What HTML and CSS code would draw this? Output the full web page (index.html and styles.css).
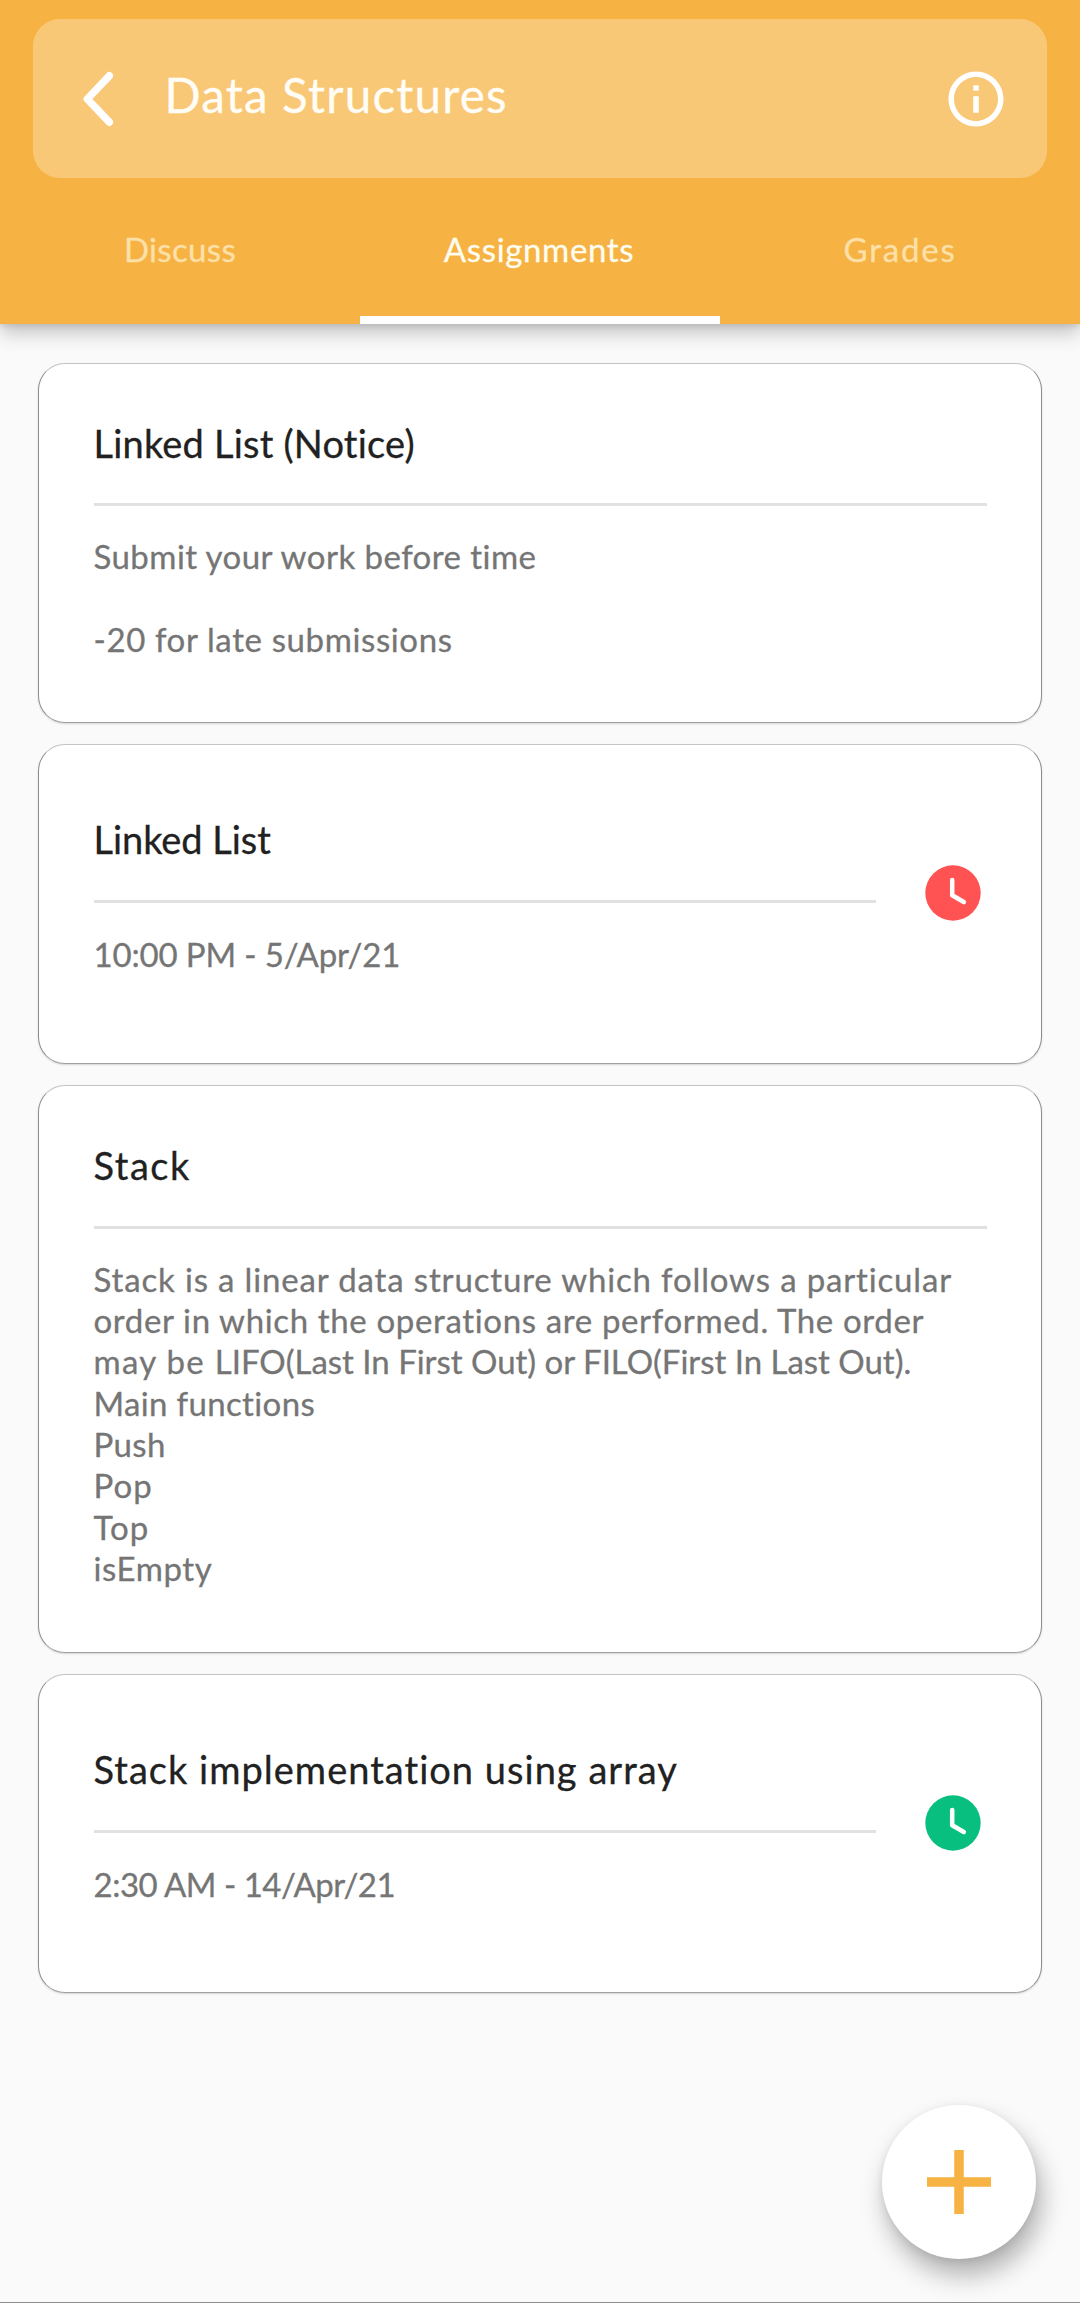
FILE: index.html
```html
<!DOCTYPE html>
<html lang="en">
<head>
<meta charset="utf-8">
<title>Data Structures - Assignments</title>
<link rel="stylesheet" href="styles.css">
</head>
<body>
<div class="screen">
  <header class="header">
    <div class="course-bar">
      <svg class="back-icon" viewBox="0 0 36 60" width="36" height="60"><path d="M30.300 6.800 8.300 30l22 23.200"/></svg>
      <h1 class="course-title">Data Structures</h1>
      <svg class="info-icon" viewBox="0 0 24 24" width="66" height="66"><path d="M11 7h2v2h-2zm0 4h2v6h-2zm1-9C6.480 2 2 6.480 2 12s4.480 10 10 10 10-4.480 10-10S17.520 2 12 2zm0 18c-4.410 0-8-3.590-8-8s3.590-8 8-8 8 3.590 8 8-3.590 8-8 8z"/></svg>
    </div>
    <nav class="tabs">
      <a class="tab tab-discuss">Discuss</a>
      <a class="tab tab-assignments active">Assignments</a>
      <a class="tab tab-grades">Grades</a>
    </nav>
  </header>

  <main class="list">
    <article class="card notice">
      <h2 class="title title-notice">Linked List (Notice)</h2>
      <hr>
      <p class="text"><span class="track-40">Submit your work before time</span><br><br><span class="track-60">-20 for late submissions</span></p>
    </article>

    <article class="card due">
      <div class="details">
        <h2 class="title title-list">Linked List</h2>
        <hr>
        <p class="text track-0">10:00 PM - 5/Apr/21</p>
      </div>
      <svg class="clock late" viewBox="0 0 56 56" width="56" height="56"><circle cx="28" cy="28" r="27.700"/><path d="M27.200 15V30.300L38.800 37"/></svg>
    </article>

    <article class="card topic">
      <h2 class="title title-stack">Stack</h2>
      <hr>
      <p class="text"><span class="track-80">Stack is a linear data structure which follows a particular</span><br><span class="track-65">order in which the operations are performed. The order</span><br><span class="track-130">may be </span><span class="track-flat">LIFO(Last In First Out) or FILO(First In Last Out).</span><br><span class="track-35">Main functions</span><br><span class="track-35">Push</span><br><span class="track-90">Pop</span><br><span class="track-90">Top</span><br><span class="track-60">isEmpty</span></p>
    </article>

    <article class="card due">
      <div class="details">
        <h2 class="title title-array">Stack implementation using array</h2>
        <hr>
        <p class="text track-tight">2:30 AM - 14/Apr/21</p>
      </div>
      <svg class="clock open" viewBox="0 0 56 56" width="56" height="56"><circle cx="28" cy="28" r="27.700"/><path d="M27.200 15V30.300L38.800 37"/></svg>
    </article>
  </main>

  <button class="add" aria-label="Add assignment">
    <svg viewBox="0 0 66 66" width="66" height="66"><path d="M33 1v64M1 33h64"/></svg>
  </button>
</div>
</body>
</html>
```
FILE: styles.css
```css
* { box-sizing: border-box; }

body {
  margin: 0;
  background: #fafafa;
  font-family: Lato, "Open Sans", sans-serif;
  -webkit-text-stroke-width: .3px;
}

.screen {
  position: relative;
  height: 2303px;
  overflow: hidden;
  border-bottom: 1px solid #8f8f8f;
}

/* Header */
.header {
  height: 323.500px;
  padding: 19px 33px 0;
  background: #f6b243;
  box-shadow: 0 9px 18px rgba(0, 0, 0, .22), 0 2px 6px rgba(0, 0, 0, .1);
}

.course-bar {
  display: flex;
  align-items: center;
  height: 159px;
  padding: 0 38.500px 0 46px;
  border-radius: 27px;
  background: #f9c877;
}

.back-icon {
  fill: none;
  stroke: #fff;
  stroke-width: 7.500;
  stroke-linecap: round;
  stroke-linejoin: round;
}

.course-title {
  flex: 1;
  margin: 0 0 7px 49.500px;
  color: #fffdf5;
  font-size: 47.500px;
  font-weight: 400;
  line-height: 56px;
  letter-spacing: 1.200px;
}

.info-icon { fill: #fff; }

.tabs {
  display: grid;
  grid-template-columns: repeat(3, 360px);
  height: 145.500px;
  margin: 0 -33px;
}

.tab {
  padding-top: 51px;
  border-bottom: 8.500px solid transparent;
  color: #fde0a8;
  font-size: 33px;
  line-height: 40px;
  text-align: center;
}

.tab.active { color: #fffdf0; border-color: #fff; }
.tab-discuss { letter-spacing: .350px; }
.tab-assignments { padding-right: 2px; letter-spacing: .650px; }
.tab-grades { letter-spacing: 1.800px; }

/* Cards */
.list {
  display: flex;
  flex-direction: column;
  gap: 21px;
  padding: 39.500px 38px 0;
}

.card {
  padding: 56.500px 54.500px 0;
  border: 1px solid #8c8c8c;
  border-top-color: #c4c4c4;
  border-bottom-color: #a0a0a0;
  border-radius: 27px;
  background: #fff;
  box-shadow: 0 1px 2px rgba(0, 0, 0, .15);
}

.notice { height: 360px; }
.topic { height: 568px; padding-top: 57.500px; }

.due {
  display: flex;
  justify-content: space-between;
  height: 319.500px;
  padding-top: 72px;
}

.details { width: 782px; }

.title {
  margin: 0 0 38.500px;
  color: #212121;
  font-size: 38px;
  font-weight: 400;
  line-height: 44px;
}

.due .title { margin-bottom: 39px; }

.title-notice { letter-spacing: .200px; }
.title-list { letter-spacing: -.050px; }
.title-stack { letter-spacing: 1.500px; }
.title-array { letter-spacing: 1.020px; }

hr {
  height: 3px;
  margin: 0 0 30px;
  border: 0;
  background: #e1e1e1;
}

.text {
  margin: 0;
  color: #757575;
  font-size: 33px;
  line-height: 41.350px;
  white-space: nowrap;
}

.due .text { margin-top: 31px; }

/* Per-phrase tracking */
.track-tight { letter-spacing: -.500px; }
.track-0 { letter-spacing: -.150px; }
.track-flat { letter-spacing: -.020px; }
.track-35 { letter-spacing: .350px; }
.track-40 { letter-spacing: .450px; }
.track-60 { letter-spacing: .620px; }
.track-65 { letter-spacing: .640px; }
.track-80 { letter-spacing: .840px; }
.track-90 { letter-spacing: 1.100px; }
.track-130 { letter-spacing: 1.300px; }

.clock { margin: 48.300px 5.500px 0 0; }
.clock path {
  fill: none;
  stroke: #fff;
  stroke-width: 4.500;
  stroke-linecap: round;
  stroke-linejoin: round;
}
.late { fill: #ff5252; }
.open { fill: #09bf80; }

/* Floating action button */
.add {
  position: absolute;
  right: 44px;
  bottom: 43.500px;
  display: grid;
  place-items: center;
  width: 154px;
  height: 154px;
  padding: 0;
  border: 0;
  border-radius: 50%;
  background: #fff;
  box-shadow: 5px 16px 26px rgba(0, 0, 0, .3), 0 2px 8px rgba(0, 0, 0, .08);
}

.add path { stroke: #f6b243; stroke-width: 9.500; }
```
